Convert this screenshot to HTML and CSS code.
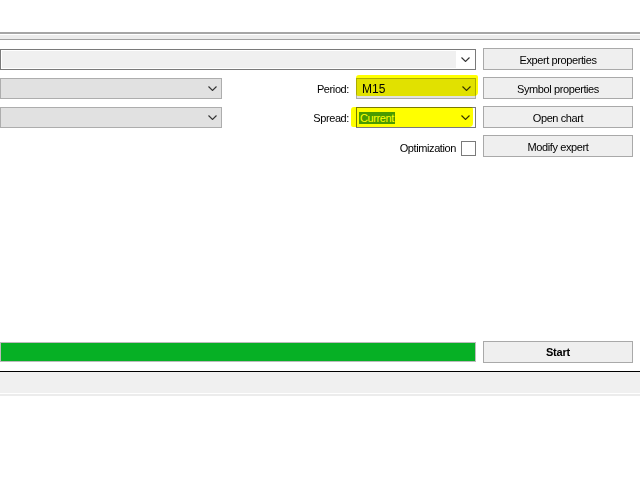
FILE: index.html
```html
<!DOCTYPE html>
<html lang="en">

<head>
    <meta charset="UTF-8">
    <meta name="viewport" content="width=device-width, initial-scale=1.0">
    <title>Strategy Tester</title>
    <link rel="stylesheet" href="styles.css">
</head>

<body>
    <div class="toolbar"></div>
    <div class="toolbar-rule"></div>
    <div class="toolbar-band"></div>
    <div class="toolbar-rule thin"></div>

    <div class="settings">
        <div class="combo edit span-3">
            <div class="combo-field"></div>
            <div class="combo-arrow">
                <svg width="9" height="5" viewBox="0 0 9 5"><path d="M0.5 0.5 L4.5 4.5 L8.5 0.5" /></svg>
            </div>
        </div>
        <button class="btn">Expert properties</button>

        <div class="combo list">
            <div class="combo-field"></div>
            <div class="combo-arrow">
                <svg width="9" height="5" viewBox="0 0 9 5"><path d="M0.5 0.5 L4.5 4.5 L8.5 0.5" /></svg>
            </div>
        </div>
        <label class="field-label">Period:</label>
        <div class="combo list">
            <div class="combo-field"><span class="value">M15</span></div>
            <div class="combo-arrow">
                <svg width="9" height="5" viewBox="0 0 9 5"><path d="M0.5 0.5 L4.5 4.5 L8.5 0.5" /></svg>
            </div>
            <span class="marker period-mark"></span>
        </div>
        <button class="btn">Symbol properties</button>

        <div class="combo list">
            <div class="combo-field"></div>
            <div class="combo-arrow">
                <svg width="9" height="5" viewBox="0 0 9 5"><path d="M0.5 0.5 L4.5 4.5 L8.5 0.5" /></svg>
            </div>
        </div>
        <label class="field-label">Spread:</label>
        <div class="combo edit white">
            <div class="combo-field"><span class="value selected">Current</span></div>
            <div class="combo-arrow">
                <svg width="9" height="5" viewBox="0 0 9 5"><path d="M0.5 0.5 L4.5 4.5 L8.5 0.5" /></svg>
            </div>
            <span class="marker spread-mark"></span>
        </div>
        <button class="btn">Open chart</button>

        <div class="option span-2">
            <span class="option-text">Optimization</span>
            <span class="checkbox"></span>
        </div>
        <button class="btn">Modify expert</button>
    </div>

    <div class="run-row">
        <div class="progress"><div class="progress-fill"></div></div>
        <button class="btn bold">Start</button>
    </div>

    <div class="status"></div>
    <div class="status-edge"></div>
</body>

</html>
```

FILE: styles.css
```css
body {
    margin: 0;
    width: 640px;
    height: 480px;
    overflow: hidden;
    background: #fff;
    font-family: "Liberation Sans", Arial, sans-serif;
    font-size: 11px;
    letter-spacing: -0.4px;
    color: #000;
}

.toolbar {
    height: 32px;
}

.toolbar-rule {
    height: 2px;
    background: #a6a6a6;
}

.toolbar-rule.thin {
    height: 1px;
    background: #a0a0a0;
}

.toolbar-band {
    height: 5px;
    background: #ececec;
    border-top: 1px solid #fff;
    box-sizing: border-box;
}

.settings {
    display: grid;
    grid-template-columns: 222px 120px 120px 150px;
    grid-auto-rows: 22px;
    column-gap: 7px;
    row-gap: 7px;
    margin-top: 8px;
    padding-right: 7px;
}

.span-3 {
    grid-column: 1 / 4;
}

.span-2 {
    grid-column: 2 / 4;
}

.btn {
    height: 22px;
    margin: 0;
    padding: 1px 0 0;
    background: #efefef;
    border: 1px solid #a9a9a9;
    font-family: inherit;
    font-size: 11px;
    letter-spacing: -0.4px;
    color: #000;
}

.btn.bold {
    padding-top: 0;
    font-weight: bold;
    letter-spacing: -0.2px;
}

.combo {
    position: relative;
    display: flex;
    height: 21px;
    margin-top: 1px;
    box-sizing: border-box;
}

.combo.list {
    border: 1px solid #adadad;
    background: #e1e1e1;
}

.combo.edit {
    border: 1px solid #7a7a7a;
    background: #fff;
    padding: 1px;
}

.combo.edit .combo-field {
    background: #f0f0f0;
}

.combo.edit.white .combo-field {
    background: #fff;
}

.combo-field {
    flex: 1;
    display: flex;
    align-items: center;
}

.combo-arrow {
    width: 18px;
    display: flex;
    align-items: center;
    justify-content: center;
}

.combo-arrow path {
    fill: none;
    stroke: #333;
    stroke-width: 1.1;
}

.value {
    padding-left: 5px;
    font-size: 12px;
    letter-spacing: 0;
}

.value.selected {
    margin-left: 1px;
    padding: 0 1px;
    background: #4a9ad7;
    color: #fff;
    font-size: 11px;
    letter-spacing: -0.4px;
}

/* highlighter strokes drawn over the two combos */
.marker {
    position: absolute;
    background: #ffff00;
    mix-blend-mode: multiply;
    border-radius: 3px 2px 4px 2px;
}

.period-mark {
    left: -1px;
    top: -4px;
    width: 122px;
    height: 21px;
}

.spread-mark {
    left: -6px;
    top: -1px;
    width: 122px;
    height: 20px;
}

.field-label {
    display: flex;
    align-items: center;
    justify-content: flex-end;
    padding-top: 1px;
}

.option {
    display: flex;
    align-items: flex-end;
    justify-content: flex-end;
    gap: 5px;
}

.option-text {
    line-height: 13px;
    padding-bottom: 2px;
}

.checkbox {
    width: 13px;
    height: 13px;
    margin-bottom: 1px;
    border: 1px solid #7a7a7a;
    background: #fff;
}

.run-row {
    display: grid;
    grid-template-columns: 476px 150px;
    column-gap: 7px;
    align-items: center;
    margin-top: 184px;
}

.progress {
    height: 20px;
    border: 1px solid #bcbcbc;
    background: #e6e6e6;
    box-sizing: border-box;
}

.progress-fill {
    height: 100%;
    background: #06b025;
}

.status {
    margin-top: 8px;
    height: 21px;
    border-top: 1px solid #000;
    border-bottom: 1px solid #fff;
    background: #f0f0f0;
}

.status-edge {
    height: 2px;
    background: #ececec;
}
```
